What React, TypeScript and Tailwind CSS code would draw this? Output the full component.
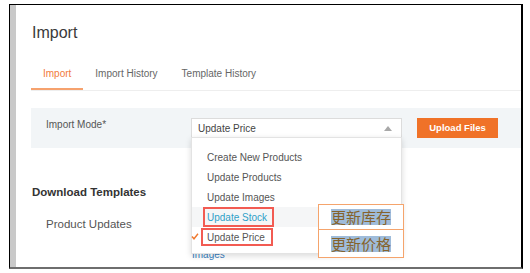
import React from "react";

// ================= DROPDOWN =================
const modes = [
  { label: "Create New Products" },
  { label: "Update Products" },
  { label: "Update Images" },
  { label: "Update Stock", hover: true },
  { label: "Update Price", checked: true },
];

function ModeMenu() {
  return (
    <div className="absolute left-0 top-[19px] z-10 w-[211px] h-[117px] bg-white border border-[#e3e3e3] shadow-[0_2px_6px_rgba(0,0,0,0.15)] pt-[9px]">
      {modes.map((m, i) => (
        <div
          key={i}
          className={`relative h-[20px] flex items-center pl-[15px] text-[10px] ${
            m.hover ? "bg-[#f5f6f7] text-[#2fa0c8]" : "text-[#555]"
          }`}
        >
          {m.checked && (
            <svg
              className="absolute left-[-1px] top-[6px]"
              width="8"
              height="7"
              viewBox="0 0 8 7"
            >
              <polyline
                points="1,3.5 3,5.8 7,0.8"
                fill="none"
                stroke="#f0782e"
                strokeWidth="1.4"
              />
            </svg>
          )}
          {m.label}
        </div>
      ))}
    </div>
  );
}

// ================= ANNOTATIONS =================
function Arrow({ top }: { top: number }) {
  return (
    <svg
      className="absolute left-[275px]"
      style={{ top }}
      width="44"
      height="12"
      viewBox="0 0 44 12"
    >
      <polygon points="0,6 14,1 14,11" fill="#f0731f" />
      <rect x="13" y="4.5" width="31" height="3" fill="#f0731f" />
    </svg>
  );
}

function Notes() {
  const cell =
    "flex items-center pl-[12px] font-['Noto_Sans_CJK_SC',sans-serif] text-[15px]";
  const mark = "bg-[#9fbcda] text-[#85632c] leading-[16px]";
  return (
    <>
      <div className="absolute left-[203px] top-[207px] w-[71px] h-[20px] border-2 border-[#f25b52] z-20" />
      <div className="absolute left-[201px] top-[228px] w-[72px] h-[18px] border-2 border-[#f25b52] z-20" />
      <Arrow top={207} />
      <Arrow top={233} />
      <div className="absolute left-[318px] top-[204px] w-[86px] h-[54px] bg-white border-[1.5px] border-[#f5a46c] flex flex-col z-20">
        <div className={`${cell} h-[25px] border-b-[1.5px] border-[#f5a46c]`}>
          <span className={mark}>更新库存</span>
        </div>
        <div className={`${cell} flex-1`}>
          <span className={mark}>更新价格</span>
        </div>
      </div>
    </>
  );
}

// ================= PAGE =================
export default function App() {
  return (
    <div className="relative w-[530px] h-[273px] bg-white overflow-hidden font-['Liberation_Sans',Arial,sans-serif]">
      <div className="ml-[9px] mt-[4px] w-[514px] h-[265px] border-l border-t border-black border-r-2 border-b-2 border-b-[#6e6e6e] flex">
        <div className="w-[6px] bg-[#c9c9c9]" />

        <div className="flex-1 pl-[15px] pt-[18px]">
          <h1 className="ml-[1px] h-[20px] text-[16px] leading-[20px] text-[#3a3a3a]">
            Import
          </h1>

          {/* tabs */}
          <div className="mt-[24px] flex border-b border-[#eeeeee] text-[10px] leading-[14px]">
            <div className="px-[12px] pb-[7px] border-b-2 border-[#f6a26e] text-[#f27a3c]">
              Import
            </div>
            <div className="px-[12px] pb-[9px] text-[#666]">Import History</div>
            <div className="px-[12px] pb-[9px] text-[#666]">Template History</div>
          </div>

          {/* import mode */}
          <div className="mt-[17px] h-[40px] bg-[#f2f5f7] pl-[15px] pt-[10px] flex items-start">
            <div className="w-[145px] text-[10px] leading-[14px] text-[#555]">
              Import Mode*
            </div>
            <div className="relative">
              <div className="w-[211px] h-[20px] bg-white border border-[#dcdcdc] flex items-center justify-between pl-[6px] pr-[9px] text-[10px] text-[#444]">
                <span>Update Price</span>
                <svg width="8" height="5" viewBox="0 0 8 5">
                  <polygon points="4,0 8,5 0,5" fill="#a8a8a8" />
                </svg>
              </div>
              <ModeMenu />
            </div>
            <button className="ml-[15px] w-[81px] h-[20px] bg-[#f07228] text-white text-[9.5px] font-bold">
              Upload Files
            </button>
          </div>

          {/* templates */}
          <div className="mt-[37px] ml-[1px] text-[11.5px] leading-[14px] font-bold text-[#333]">
            Download Templates
          </div>
          <div className="mt-[18px] flex text-[11.5px] leading-[14px] text-[#555]">
            <div className="w-[161px] pl-[15px]">Product Updates</div>
          </div>
          <div className="mt-[17px] ml-[161px] text-[10px] leading-[14px] text-[#3a7fc0]">
            Images
          </div>
        </div>
      </div>

      <Notes />
    </div>
  );
}
